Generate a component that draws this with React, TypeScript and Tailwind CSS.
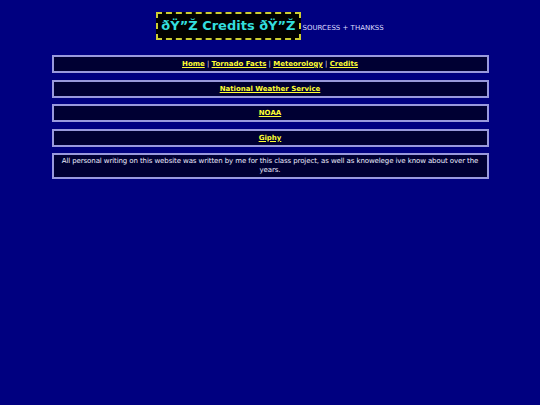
export default function App() {
  const box =
    "mx-auto w-[437px] border-2 border-[#9999dd] bg-[#000033] px-2 text-center"
  const link = "font-bold text-[#ffff33] underline"

  return (
    <div className="min-h-[405px] bg-[#000080] pt-3 font-['DejaVu_Sans',Verdana,sans-serif] text-[7px] text-[#ddddff]">
      {/* header */}
      <div className="flex items-end justify-center">
        <h1 className="border-2 border-dashed border-[#cccc33] bg-black px-[3px] py-[2px] text-[13px] leading-[20px] font-bold text-[#33dddd]">
          ðŸ”Ž Credits ðŸ”Ž
        </h1>
        <span className="mb-[8px] ml-[2px] text-[7px] leading-[8px] text-[#ddddff]">SOURCESS + THANKSS</span>
      </div>

      <div className="mt-[15px] flex flex-col gap-[6.5px]">
        <div className={`${box} py-[2px] leading-[10px]`}>
          <a className={link}>Home</a> | <a className={link}>Tornado Facts</a> |{" "}
          <a className={link}>Meteorology</a> | <a className={link}>Credits</a>
        </div>
        <div className={`${box} py-[2px] leading-[10px]`}>
          <a className={link}>National Weather Service</a>
        </div>
        <div className={`${box} py-[2px] leading-[10px]`}>
          <a className={link}>NOAA</a>
        </div>
        <div className={`${box} py-[2px] leading-[10px]`}>
          <a className={link}>Giphy</a>
        </div>
        <div className="mx-auto w-[437px] border-2 border-[#9999dd] bg-[#000033] px-[2px] py-[2px] text-center leading-[9px] tracking-[-0.1px] text-[#eeeeff]">
          All personal writing on this website was written by me for this class project, as well as knowelege ive know about over the years.
        </div>
      </div>
    </div>
  )
}
